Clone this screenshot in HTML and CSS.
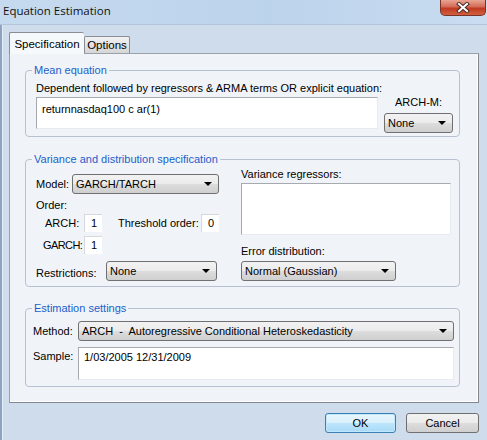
FILE: index.html
```html
<!DOCTYPE html>
<html lang="en">
<head>
  <meta charset="UTF-8">
  <title>Equation Estimation</title>
  <link rel="stylesheet" href="styles.css">
</head>
<body>
  <div class="window">
    <div class="titlebar">
      <span class="title">Equation Estimation</span>
      <span class="close">
        <svg width="14" height="11" viewBox="0 0 14 11">
          <path d="M3 2 L11 9 M11 2 L3 9" stroke="#4a2a26" stroke-width="4" stroke-linecap="square"/>
          <path d="M3 2 L11 9 M11 2 L3 9" stroke="#fff" stroke-width="2" stroke-linecap="square"/>
        </svg>
      </span>
    </div>

    <div class="client">
      <div class="tabs">
        <div class="tab active">Specification</div>
        <div class="tab">Options</div>
      </div>

      <div class="panel">
        <fieldset class="group">
          <legend>Mean equation</legend>
          <div class="mean-row">
            <div class="mean-main">
              <div class="label">Dependent followed by regressors &amp; ARMA terms OR explicit equation:</div>
              <div class="edit eq">returnnasdaq100 c ar(1)</div>
            </div>
            <div class="mean-side">
              <div class="label">ARCH-M:</div>
              <div class="combo archm"><span>None</span><i class="arrow"></i></div>
            </div>
          </div>
        </fieldset>

        <fieldset class="group variance">
          <legend>Variance and distribution specification</legend>
          <div class="var-row">
            <div class="var-left">
              <div class="model-row">
                <span class="label">Model:</span>
                <div class="combo model"><span>GARCH/TARCH</span><i class="arrow"></i></div>
              </div>
              <div class="label order">Order:</div>
              <div class="order-row">
                <span class="label order-name">ARCH:</span>
                <div class="num">1</div>
                <span class="label thr">Threshold order:</span>
                <div class="num push">0</div>
              </div>
              <div class="order-row garch">
                <span class="label order-name">GARCH:</span>
                <div class="num">1</div>
              </div>
              <div class="restr-row">
                <span class="label">Restrictions:</span>
                <div class="combo restr"><span>None</span><i class="arrow"></i></div>
              </div>
            </div>
            <div class="var-right">
              <div class="label">Variance regressors:</div>
              <div class="edit regressors"></div>
              <div class="label err">Error distribution:</div>
              <div class="combo errdist"><span>Normal (Gaussian)</span><i class="arrow"></i></div>
            </div>
          </div>
        </fieldset>

        <fieldset class="group estim">
          <legend>Estimation settings</legend>
          <div class="est-body">
            <div class="est-row">
              <span class="label est-name">Method:</span>
              <div class="combo method"><span>ARCH&nbsp; -&nbsp; Autoregressive Conditional Heteroskedasticity</span><i class="arrow"></i></div>
            </div>
            <div class="est-row sample-row">
              <span class="label est-name">Sample:</span>
              <div class="edit sample">1/03/2005 12/31/2009</div>
            </div>
          </div>
        </fieldset>
      </div>

      <div class="buttons">
        <button class="btn default">OK</button>
        <button class="btn">Cancel</button>
      </div>
    </div>
  </div>
</body>
</html>
```

FILE: styles.css
```css
body {
  margin: 0;
  width: 487px;
  height: 440px;
  overflow: hidden;
  background: #cfdcec;
  font-family: "Liberation Sans", Arial, sans-serif;
  font-size: 11px;
  color: #000;
}

.window {
  height: 440px;
  box-shadow: inset 2px 0 0 #8ea3bf, inset 3px 0 0 #e4edf7;
}

.titlebar {
  height: 24px;
  display: flex;
  justify-content: space-between;
  align-items: flex-start;
  background: linear-gradient(to right, #c6daef, #bcd3ec 55%, #c9dcf0);
  border-bottom: 1px solid #b3c5da;
}

.title {
  padding-left: 3px;
  line-height: 22px;
  font-family: "Open Sans", sans-serif;
  font-size: 11.5px;
  color: #111;
}

.close {
  width: 44px;
  height: 15px;
  margin-right: 1px;
  display: flex;
  align-items: center;
  justify-content: center;
  border: 1px solid #7a3328;
  border-top: none;
  border-radius: 0 0 5px 5px;
  background: linear-gradient(#e8a593, #d46b55 45%, #c13a22 55%, #d0603f);
}

.client {
  padding: 7px 8px 0 9px;
}

/* tabs */
.tabs {
  display: flex;
  align-items: flex-end;
  height: 21px;
}

.tab {
  height: 17px;
  width: 46px;
  box-sizing: border-box;
  text-align: center;
  line-height: 16px;
  border: 1px solid #898c95;
  border-bottom: none;
  border-radius: 2px 2px 0 0;
  background: linear-gradient(#f2f2f2, #e3e3e3 50%, #d6d6d6);
  font-size: 11.5px;
}

.tab.active {
  position: relative;
  z-index: 1;
  width: 75px;
  height: 22px;
  margin-bottom: -1px;
  line-height: 22px;
  border-right: none;
  background: #f6f9fc;
}

.panel {
  height: 350px;
  box-sizing: border-box;
  padding: 10px 18px 0 15px;
  background: #f0f4f9;
  border: 1px solid #9aa1ab;
  border-right-color: #828790;
  border-bottom-color: #828790;
  box-shadow: inset -1px -1px 0 #fff;
}

/* group boxes */
.group {
  margin: 0;
  padding: 0;
  min-width: 0;
  border: 1px solid #b6c2d1;
  border-radius: 4px;
}

.group legend {
  margin-left: 6px;
  padding: 0 2px;
  line-height: 13px;
  color: #1c5ec9;
}

.label {
  line-height: 14px;
  white-space: nowrap;
}

.edit {
  box-sizing: border-box;
  background: #fff;
  border: 1px solid #e6ebf1;
  border-top-color: #a6a9af;
  border-left-color: #a6a9af;
  line-height: 14px;
}

.combo {
  height: 20px;
  box-sizing: border-box;
  display: flex;
  align-items: center;
  justify-content: space-between;
  padding: 0 6px 0 3px;
  border: 1px solid #707070;
  border-radius: 3px;
  background: linear-gradient(#f2f2f2, #ebebeb 50%, #dddddd 51%, #cfcfcf);
  white-space: nowrap;
}

.arrow {
  width: 0;
  height: 0;
  border-left: 4px solid transparent;
  border-right: 4px solid transparent;
  border-top: 4px solid #000;
}

/* mean equation */
.mean-row {
  display: flex;
  align-items: flex-start;
  padding: 4px 5px 3px 10px;
}

.mean-main {
  width: 342px;
}

.eq {
  height: 32px;
  margin-top: 2px;
  padding: 4px 5px;
}

.mean-side {
  margin-left: 6px;
  padding-top: 14px;
  text-align: center;
}

.archm {
  width: 69px;
  margin-top: 4px;
  text-align: left;
}

/* variance */
.variance {
  margin-top: 16px;
}

.var-row {
  display: flex;
  padding: 0 7px 5px 10px;
}

.var-left {
  width: 183px;
}

.model-row {
  display: flex;
  align-items: center;
  justify-content: space-between;
  margin-top: 8px;
}

.model {
  width: 147px;
}

.order {
  margin-top: 4px;
}

.order-row {
  display: flex;
  align-items: center;
  margin-top: 2px;
}

.order-row.garch {
  margin-top: 4px;
}

.order-name {
  width: 39px;
  padding-left: 9px;
}

.garch .order-name {
  width: 41px;
  padding-left: 7px;
  letter-spacing: -0.6px;
}

.num {
  width: 18px;
  height: 18px;
  box-sizing: border-box;
  padding-left: 6px;
  line-height: 17px;
  background: #fff;
  border-top: 1px solid #d5d9de;
  border-left: 1px solid #d5d9de;
}

.thr {
  margin-left: 16px;
}

.push {
  margin-left: auto;
}

.restr-row {
  display: flex;
  align-items: center;
  justify-content: space-between;
  margin-top: 7px;
  padding-right: 2px;
}

.restr-row .label {
  padding-top: 3px;
}

.restr {
  width: 111px;
}

.var-right {
  width: 210px;
  margin-left: 22px;
  padding-top: 1px;
}

.regressors {
  height: 52px;
  margin-top: 2px;
}

.err {
  margin-top: 9px;
}

.errdist {
  width: 155px;
  margin-top: 3px;
}

/* estimation */
.estim {
  margin-top: 15px;
}

.est-body {
  padding: 6px 5px 6px 7px;
}

.est-row {
  display: flex;
  align-items: center;
}

.est-name {
  width: 45px;
}

.method {
  flex: 1;
}

.sample-row {
  align-items: flex-start;
  margin-top: 6px;
}

.sample-row .label {
  margin-top: 2px;
}

.sample {
  flex: 1;
  height: 33px;
  padding: 2px 5px;
}

/* dialog buttons */
.buttons {
  display: flex;
  justify-content: flex-end;
  gap: 10px;
  margin-top: 10px;
}

.btn {
  width: 73px;
  height: 20px;
  padding: 0;
  font-family: "Liberation Sans", Arial, sans-serif;
  font-size: 11px;
  border: 1px solid #707070;
  border-radius: 3px;
  background: linear-gradient(#f2f2f2, #ebebeb 50%, #dddddd 51%, #cfcfcf);
}

.btn.default {
  width: 71px;
  border-color: #3c7fb1;
  box-shadow: inset 0 0 0 1px #bfe7fd;
  background: linear-gradient(#eaf6fd, #d9f0fc 50%, #bee6fd 51%, #a7d9f5);
}
```
